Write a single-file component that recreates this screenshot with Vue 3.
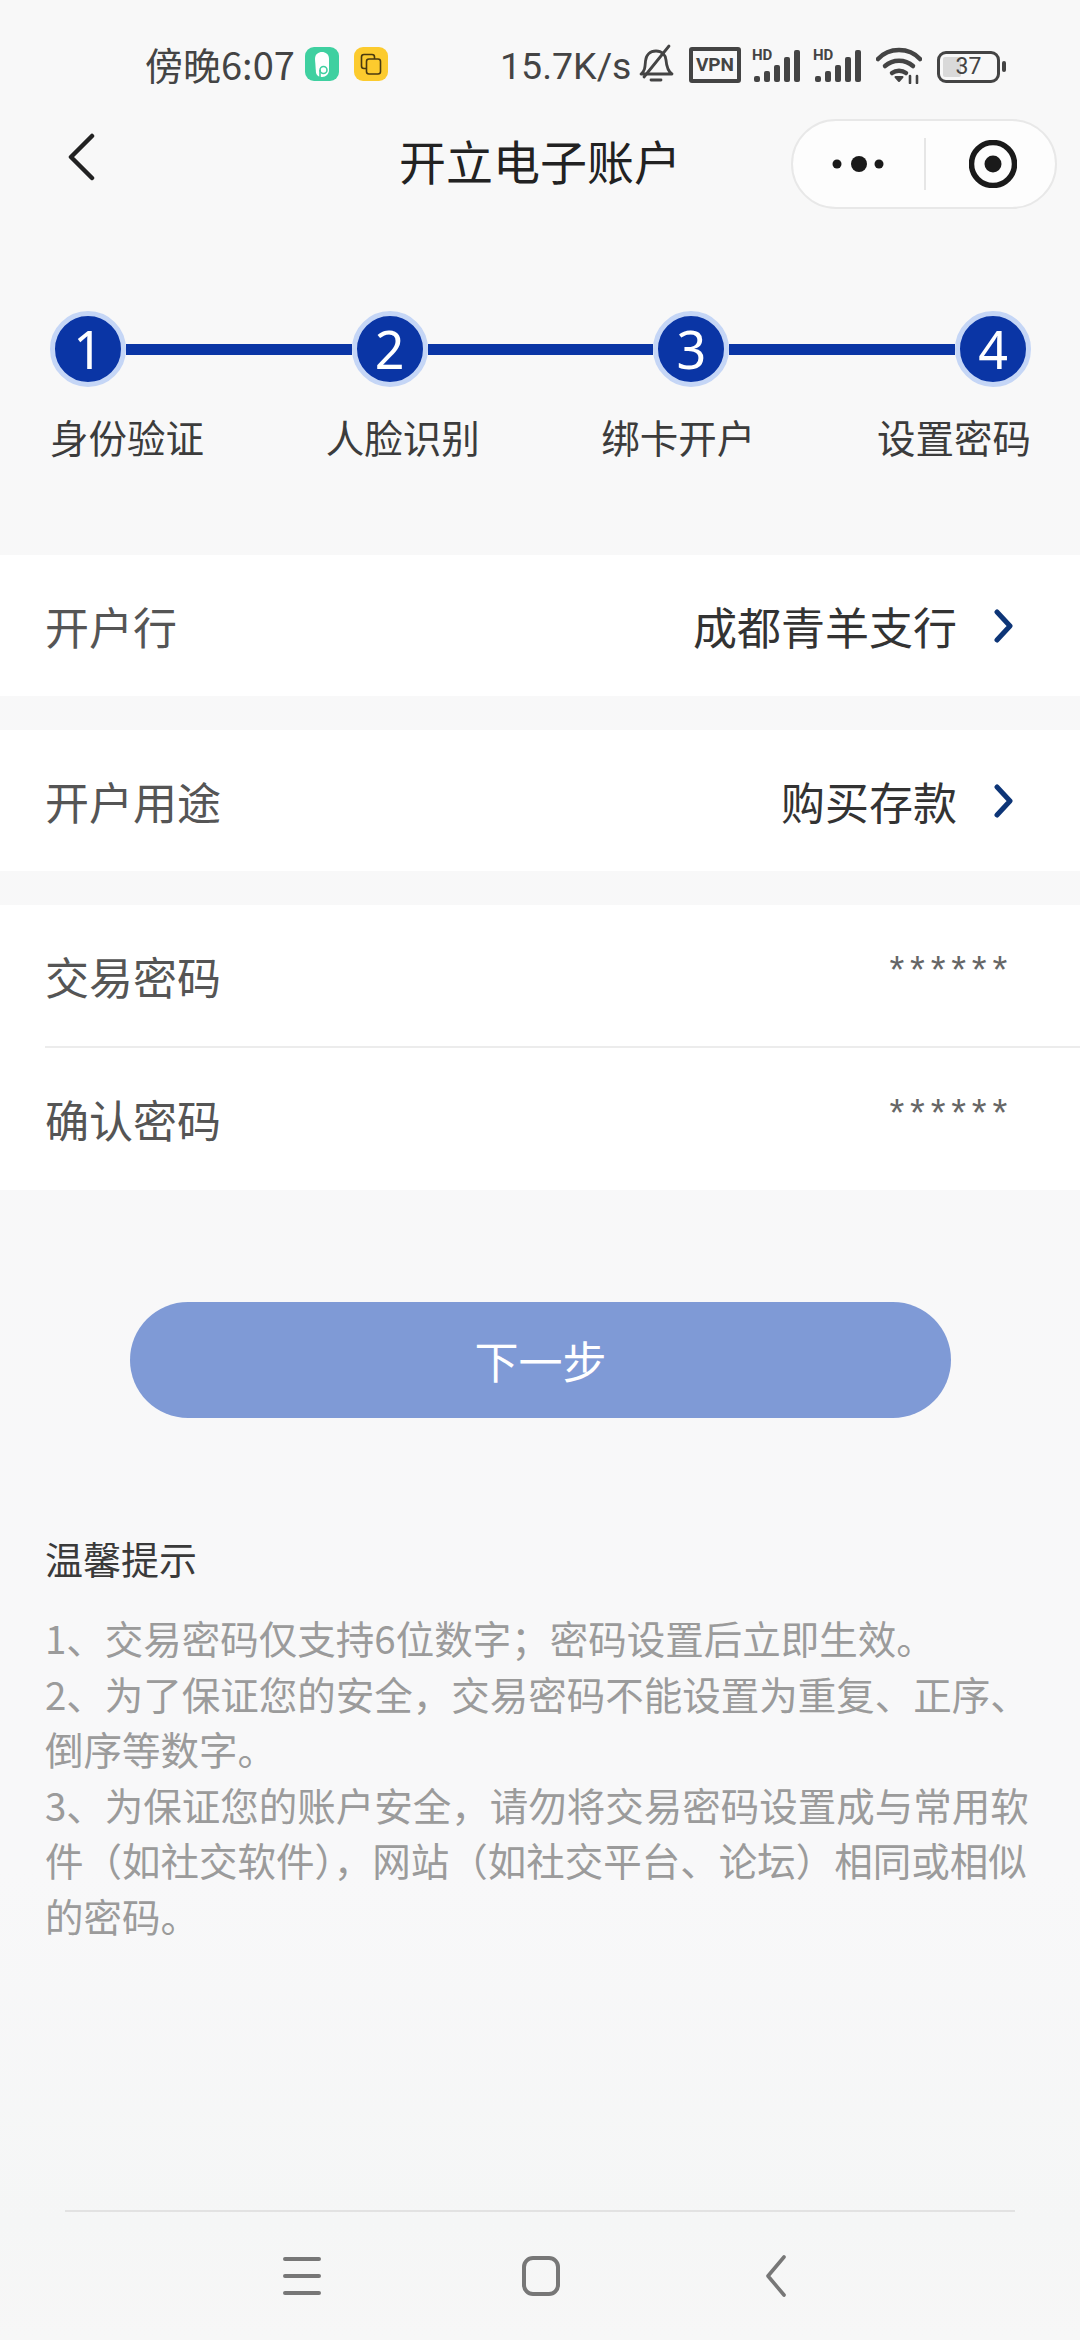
<template>
  <div class="page">
    <div class="status-bar">
      <span class="status-time">傍晚6:07</span>
      <svg class="app-icon" width="34" height="34" viewBox="0 0 34 34">
        <rect width="34" height="34" rx="9" fill="#3fd0a0" />
        <path d="M10 12c0-5 3.500-7 7-7s7 2 7 7v11c0 4-3 7-7 7-2.500 0-5-1-6-4z" fill="#fff" />
        <circle cx="18.500" cy="23" r="3.500" fill="none" stroke="#3fd0a0" stroke-width="1.600" />
        <path d="M15 23v7" stroke="#3fd0a0" stroke-width="1.600" />
      </svg>
      <svg class="app-icon second" width="34" height="34" viewBox="0 0 34 34">
        <rect width="34" height="34" rx="9" fill="#fccb2e" />
        <rect x="7.500" y="7.500" width="13" height="14" rx="2.500" fill="none" stroke="#4a3a10" stroke-width="1.600" />
        <rect x="12.500" y="12" width="14" height="15" rx="2.500" fill="#fccb2e" stroke="#4a3a10" stroke-width="1.600" />
      </svg>
      <span class="status-speed">15.7K/s</span>
      <svg class="bell" width="36" height="40" viewBox="0 0 36 40" fill="none" stroke="#444" stroke-width="2.800" stroke-linecap="round" stroke-linejoin="round">
        <path d="M3 30c4-3 4-7 4.500-13 .5-6 4.500-10 10.500-10s9.500 4 10 9c.5 6 1.500 11 6 14z" />
        <path d="M13 36h10" />
        <path d="M6 33 31 2" />
      </svg>
      <span class="vpn">VPN</span>
      <svg v-for="n in 2" :key="n" class="signal" width="50" height="36" viewBox="0 0 50 36">
        <text x="0" y="13" class="hd">HD</text>
        <rect x="2" y="29" width="6" height="6" rx="2" fill="#444" />
        <rect x="12" y="24" width="6" height="11" rx="2" fill="#444" />
        <rect x="22" y="18" width="6" height="17" rx="2" fill="#444" />
        <rect x="32" y="10" width="6" height="25" rx="2" fill="#444" />
        <rect x="42" y="3" width="6" height="32" rx="2" fill="#444" />
      </svg>
      <svg class="wifi" width="46" height="38" viewBox="0 0 46 38" fill="none" stroke="#444" stroke-width="4.500" stroke-linecap="round">
        <path d="M2 13C13 1 33 1 44 13" />
        <path d="M9 20c8-7 20-7 28 0" />
        <path d="M16 27c4-3 10-3 14 0" />
        <path d="M23 35l-3.500-4h7z" fill="#444" stroke-width="2" stroke-linejoin="round" />
        <path d="M34 30v7M41 30v7" stroke-width="2.600" />
      </svg>
      <div class="battery">
        <span class="battery-fill"></span>
        <span class="battery-num">37</span>
      </div>
      <span class="battery-nub"></span>
    </div>

    <div class="nav">
      <svg class="back" width="30" height="48" viewBox="0 0 30 48" fill="none" stroke="#222" stroke-width="4.500" stroke-linecap="round" stroke-linejoin="round">
        <path d="M26 3 5 24l21 21" />
      </svg>
      <span class="nav-title">开立电子账户</span>
      <div class="capsule">
        <svg width="76" height="20" viewBox="0 0 76 20" fill="#1a1a1a">
          <circle cx="9" cy="10" r="4.500" />
          <circle cx="31" cy="10" r="8" />
          <circle cx="51" cy="10" r="4.500" />
        </svg>
        <span class="capsule-line"></span>
        <svg width="48" height="48" viewBox="0 0 48 48">
          <circle cx="24" cy="24" r="21.500" fill="none" stroke="#1a1a1a" stroke-width="5.500" />
          <circle cx="24" cy="24" r="8.500" fill="#1a1a1a" />
        </svg>
      </div>
    </div>

    <div class="steps">
      <template v-for="(s, i) in steps" :key="s">
        <span class="step-line" v-if="i > 0"></span>
        <span class="step-dot">{{ i + 1 }}</span>
      </template>
    </div>
    <div class="step-labels">
      <span v-for="s in steps" :key="s">{{ s }}</span>
    </div>

    <div class="group first">
      <div class="row">
        <span class="row-label">开户行</span>
        <span class="row-value">成都青羊支行</span>
        <svg class="chev" width="22" height="34" viewBox="0 0 22 34" fill="none" stroke="#0d3577" stroke-width="5" stroke-linecap="round" stroke-linejoin="round">
          <path d="M5 3l13 14L5 31" />
        </svg>
      </div>
    </div>
    <div class="group">
      <div class="row">
        <span class="row-label">开户用途</span>
        <span class="row-value">购买存款</span>
        <svg class="chev" width="22" height="34" viewBox="0 0 22 34" fill="none" stroke="#0d3577" stroke-width="5" stroke-linecap="round" stroke-linejoin="round">
          <path d="M5 3l13 14L5 31" />
        </svg>
      </div>
    </div>
    <div class="group">
      <div class="row pwd">
        <span class="row-label">交易密码</span>
        <span class="stars">******</span>
      </div>
      <div class="row pwd divided">
        <span class="row-label">确认密码</span>
        <span class="stars">******</span>
      </div>
    </div>

    <button class="next">下一步</button>

    <div class="tips">
      <div class="tips-title">温馨提示</div>
      <p>1、交易密码仅支持6位数字；密码设置后立即生效。</p>
      <p>2、为了保证您的安全，交易密码不能设置为重复、正序、倒序等数字。</p>
      <p>3、为保证您的账户安全，请勿将交易密码设置成与常用软件（如社交软件），网站（如社交平台、论坛）相同或相似的密码。</p>
    </div>

    <div class="bottom-nav">
      <svg width="38" height="38" viewBox="0 0 38 38" stroke="#777" stroke-width="4" stroke-linecap="round">
        <path d="M2 2h34M2 19h34M2 36h34" />
      </svg>
      <svg class="home" width="38" height="40" viewBox="0 0 38 40" fill="none" stroke="#777" stroke-width="4">
        <rect x="2" y="2" width="34" height="36" rx="9" />
      </svg>
      <svg width="20" height="42" viewBox="0 0 20 42" fill="none" stroke="#777" stroke-width="3.600" stroke-linecap="round" stroke-linejoin="round">
        <path d="M18 2 2 21l16 19" />
      </svg>
    </div>
  </div>
</template>

<script setup>
const steps = ["身份验证", "人脸识别", "绑卡开户", "设置密码"];
</script>

<style>
body {
  margin: 0;
  background: #f8f8f8;
}
</style>

<style scoped>
.page {
  width: 1080px;
  height: 2340px;
  display: flex;
  flex-direction: column;
  background: linear-gradient(#f8f8f8 0%, #f8f8f9 80%, #f5f6f6 95%, #f7f7f7 100%);
  font-family: "Noto Sans CJK SC", "Noto Sans", sans-serif;
  color: #333;
  overflow: hidden;
}

/* status bar */
.status-bar {
  height: 120px;
  box-sizing: border-box;
  padding: 44px 0 0 145px;
  display: flex;
  align-items: flex-start;
  color: #444;
}
.status-time {
  font-size: 38px;
  line-height: 40px;
  width: 160px;
  white-space: nowrap;
}
.app-icon {
  margin-top: 3px;
  flex-shrink: 0;
}
.app-icon.second {
  margin-left: 15px;
}
.status-speed {
  font-family: Roboto, sans-serif;
  font-size: 37.500px;
  line-height: 40px;
  margin-top: 2px;
  margin-left: 112px;
  width: 138px;
  white-space: nowrap;
}
.bell {
  margin-top: 0;
}
.vpn {
  margin: 3px 0 0 15px;
  width: 52px;
  height: 36px;
  box-sizing: border-box;
  border: 4px solid #444;
  border-radius: 3px;
  font-family: Roboto, sans-serif;
  font-weight: 700;
  font-size: 19px;
  line-height: 28px;
  text-align: center;
}
.signal {
  margin: 3px 0 0 11px;
  overflow: visible;
}
.signal .hd {
  font-family: Roboto, sans-serif;
  font-size: 15px;
  font-weight: 700;
  fill: #444;
}
.wifi {
  margin: 2px 0 0 13px;
}
.battery {
  position: relative;
  margin: 7px 0 0 15px;
  width: 63px;
  height: 32px;
  box-sizing: border-box;
  border: 3.500px solid #444;
  border-radius: 9px;
  flex-shrink: 0;
}
.battery-fill {
  position: absolute;
  left: 3px;
  top: 3px;
  bottom: 3px;
  width: 18px;
  background: #d9d9d9;
  border-radius: 2px;
}
.battery-num {
  position: absolute;
  inset: 0;
  text-align: center;
  font-family: Roboto, sans-serif;
  font-size: 23px;
  line-height: 25px;
  color: #444;
}
.battery-nub {
  margin: 17px 0 0 2px;
  width: 4px;
  height: 11px;
  border-radius: 2px;
  background: #444;
}

/* nav */
.nav {
  position: relative;
  height: 80px;
  display: flex;
  align-items: center;
  justify-content: center;
}
.back {
  position: absolute;
  left: 66px;
  top: 13px;
}
.nav-title {
  font-size: 47px;
  color: #222;
  line-height: 78px;
  margin-right: 0;
}
.capsule {
  position: absolute;
  left: 791px;
  top: -1px;
  width: 266px;
  height: 90px;
  box-sizing: border-box;
  border: 2px solid #e8e8e8;
  border-radius: 45px;
  background: #fdfdfd;
  display: flex;
  align-items: center;
  padding-left: 35px;
}
.capsule-line {
  width: 2px;
  height: 52px;
  background: #e6e6e6;
  margin-left: 20px;
  margin-right: 43px;
}

/* steps */
.steps {
  margin-top: 111px;
  padding: 0 49px 0 50px;
  display: flex;
  align-items: center;
}
.step-dot {
  width: 66px;
  height: 66px;
  flex-shrink: 0;
  box-sizing: content-box;
  border: 5px solid #c5d6f6;
  border-radius: 50%;
  background: #0a35a5;
  color: #fff;
  font-family: "Noto Sans", sans-serif;
  font-size: 52px;
  line-height: 66px;
  text-align: center;
}
.step-line {
  flex: 1;
  height: 11px;
  background: #0a35a5;
}
.step-labels {
  margin-top: 21px;
  padding: 0 49px 0 50px;
  display: flex;
  justify-content: space-between;
  font-size: 38.500px;
  line-height: 56px;
  color: #3c3c3c;
}

/* rows */
.group {
  background: #fff;
  margin-bottom: 34px;
}
.group.first {
  margin-top: 91px;
}
.row {
  height: 141px;
  padding: 0 66px 0 45px;
  display: flex;
  align-items: center;
}
.row-label {
  flex: 1;
  font-size: 44px;
  color: #555;
}
.row-value {
  font-size: 44px;
  color: #333;
}
.chev {
  margin-left: 35px;
}
.row.pwd {
  height: 141px;
  padding-right: 73px;
}
.row.divided {
  height: 144px;
  border-top: 2px solid #ececec;
  box-sizing: border-box;
  margin-left: 45px;
  padding-left: 0;
}
.stars {
  font-family: "Liberation Sans", sans-serif;
  font-size: 38px;
  letter-spacing: 5.800px;
  color: #666;
  margin-right: -6px;
  margin-top: -12px;
  line-height: 40px;
}

/* button */
.next {
  display: block;
  margin: 78px 0 0 130px;
  width: 821px;
  height: 116px;
  border: none;
  border-radius: 58px;
  background: #7f9ad6;
  color: #fff;
  font-family: inherit;
  font-size: 44px;
  padding: 0;
}

/* tips */
.tips {
  margin-top: 111px;
  padding: 0 45px;
}
.tips-title {
  font-size: 38px;
  line-height: 58px;
  color: #3a3a3a;
  margin-bottom: 23px;
}
.tips p {
  margin: 0;
  font-size: 38.500px;
  line-height: 55.600px;
  color: #9b9b9b;
}

/* bottom nav */
.bottom-nav {
  margin: auto 65px 0;
  height: 130px;
  box-sizing: border-box;
  border-top: 2px solid #e2e2e2;
  display: flex;
  align-items: center;
  justify-content: space-between;
  padding: 0 229px 0 218px;
}
.home {
  margin-right: 5px;
}
</style>
